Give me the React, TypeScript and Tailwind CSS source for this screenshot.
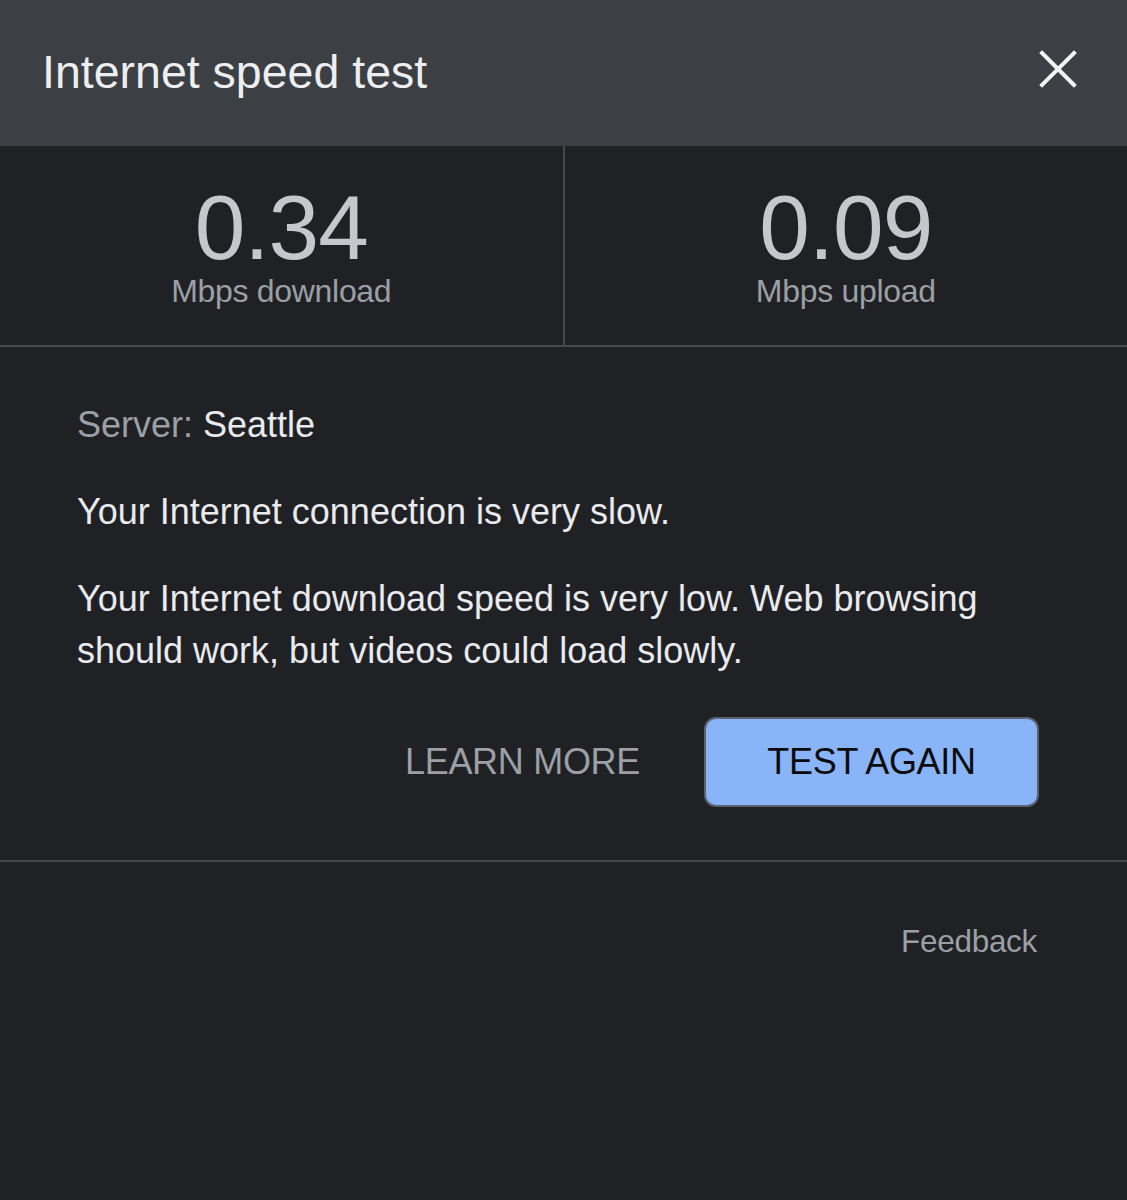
const font = "font-['Liberation_Sans','Helvetica',Arial,sans-serif]";

function Stat({ value, label }: { value: string; label: string }) {
  return (
    <div className="flex flex-1 flex-col items-center pt-[40px]">
      <div className="text-[91px] leading-[84px] text-[#c4c7cb] tracking-[-1px]">{value}</div>
      <div className="mt-[3px] text-[32px] leading-[36px] text-[#9aa0a6] tracking-[-0.3px]">{label}</div>
    </div>
  );
}

function CloseIcon() {
  return (
    <svg width="38" height="38" viewBox="0 0 38 38" fill="none" stroke="currentColor" strokeWidth="4" strokeLinecap="square">
      <path d="M3 3L35 35M35 3L3 35" />
    </svg>
  );
}

export default function App() {
  return (
    <div className={`${font} min-h-[1200px] w-full bg-[#202124] text-[#e8eaed]`}>
      {/* header */}
      <header className="flex h-[146px] items-center justify-between bg-[#3c3f43] pl-[42px] pr-[50px]">
        <h1 className="pb-[2px] text-[46.5px] leading-[56px] text-[#eceef0]">Internet speed test</h1>
        <button className="-mt-[8px] text-[#f1f3f4]" aria-label="Close">
          <CloseIcon />
        </button>
      </header>

      {/* results */}
      <div className="flex h-[201px] border-b-2 border-[#46484b]">
        <Stat value="0.34" label="Mbps download" />
        <div className="w-[2px] bg-[#46484b]" />
        <Stat value="0.09" label="Mbps upload" />
      </div>

      {/* details */}
      <div className="border-b-2 border-[#46484b] pb-[53px] pl-[77px] pr-[80px] pt-[52px] text-[36px] leading-[52px]">
        <p>
          <span className="text-[#9aa0a6]">Server: </span>
          <span>Seattle</span>
        </p>
        <p className="mt-[35px]">Your Internet connection is very slow.</p>
        <p className="mt-[35px]">
          Your Internet download speed is very low. Web browsing should work, but videos could load slowly.
        </p>
        <div className="mt-[40px] flex items-center justify-end gap-[64px] pr-[8px]">
          <button className="text-[36px] leading-[40px] text-[#9aa0a6] tracking-[-0.3px]">LEARN MORE</button>
          <button className="flex h-[90px] w-[335px] items-center justify-center rounded-[12px] border-2 border-[#5a6270] bg-[#8ab4f8] text-[36px] leading-[40px] text-[#0b0b0c] tracking-[-0.3px]">
            TEST AGAIN
          </button>
        </div>
      </div>

      {/* footer */}
      <div className="flex justify-end pr-[90px] pt-[59px]">
        <a className="text-[31.5px] leading-[40px] text-[#9aa0a6] tracking-[-0.3px]">Feedback</a>
      </div>
    </div>
  );
}
